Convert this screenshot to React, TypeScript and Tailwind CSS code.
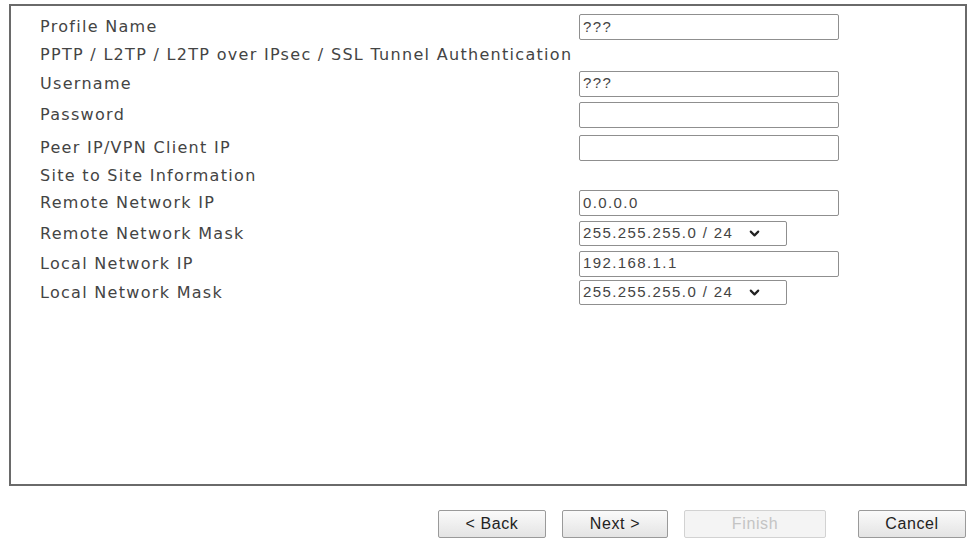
import { ChevronDown } from "lucide-react";

const rows: { label: string; h: string; field?: "input" | "select"; value?: string }[] = [
  { label: "Profile Name", h: "h-[30px]", field: "input", value: "???" },
  { label: "PPTP / L2TP / L2TP over IPsec / SSL Tunnel Authentication", h: "h-[26px]" },
  { label: "Username", h: "h-[31px]", field: "input", value: "???" },
  { label: "Password", h: "h-[32px]", field: "input", value: "" },
  { label: "Peer IP/VPN Client IP", h: "h-[33px]", field: "input", value: "" },
  { label: "Site to Site Information", h: "h-[24px]" },
  { label: "Remote Network IP", h: "h-[30px]", field: "input", value: "0.0.0.0" },
  { label: "Remote Network Mask", h: "h-[31px]", field: "select", value: "255.255.255.0 / 24" },
  { label: "Local Network IP", h: "h-[29px]", field: "input", value: "192.168.1.1" },
  { label: "Local Network Mask", h: "h-[29px]", field: "select", value: "255.255.255.0 / 24" },
];

function Field({ kind, value }: { kind: "input" | "select"; value: string }) {
  if (kind === "select") {
    return (
      <div className="flex h-[25px] w-[208px] items-center justify-between rounded-[2px] border border-[#8f8f8f] bg-white pl-[3px] pr-[24px] font-['Liberation_Sans',Arial,sans-serif] text-[15px] tracking-[1.4px] text-[#444]">
        <span>{value}</span>
        <ChevronDown size={15} strokeWidth={3.4} className="text-[#222]" />
      </div>
    );
  }
  return (
    <div className="flex h-[26px] w-[260px] items-center rounded-[2px] border border-[#8f8f8f] bg-white px-[3px] font-['Liberation_Sans',Arial,sans-serif] text-[15px] tracking-[1.4px] text-[#444]">
      {value}
    </div>
  );
}

function Btn({ children, w, disabled }: { children: string; w: string; disabled?: boolean }) {
  return (
    <button
      className={
        "h-[28px] rounded-[2px] border text-[16px] tracking-[0.6px] " +
        w +
        (disabled
          ? " border-[#d2d2d2] bg-[#f4f4f4] text-[#c4c4c4]"
          : " border-[#9a9a9a] bg-gradient-to-b from-[#fafafa] to-[#e4e4e4] text-[#222]")
      }
    >
      {children}
    </button>
  );
}

export default function App() {
  return (
    <div className="h-[542px] w-[968px] overflow-hidden bg-white font-['Liberation_Sans',Arial,sans-serif]">
      <div className="ml-[9px] mt-[4px] h-[482px] w-[958px] border-2 border-[#6a6a6a] pt-[6px] pl-[29px] font-['DejaVu_Sans',Verdana,sans-serif] text-[16px] tracking-[1.3px] text-[#444]">
        {rows.map((r) => (
          <div key={r.label} className={"flex items-center " + r.h}>
            <div className="w-[539px] whitespace-nowrap">{r.label}</div>
            {r.field && <Field kind={r.field} value={r.value ?? ""} />}
          </div>
        ))}
      </div>
      <div className="mt-[24px] flex pl-[438px]">
        <Btn w="w-[108px]">{"< Back"}</Btn>
        <div className="w-[16px]" />
        <Btn w="w-[106px]">{"Next >"}</Btn>
        <div className="w-[16px]" />
        <Btn w="w-[142px]" disabled>
          Finish
        </Btn>
        <div className="w-[32px]" />
        <Btn w="w-[108px]">Cancel</Btn>
      </div>
    </div>
  );
}
